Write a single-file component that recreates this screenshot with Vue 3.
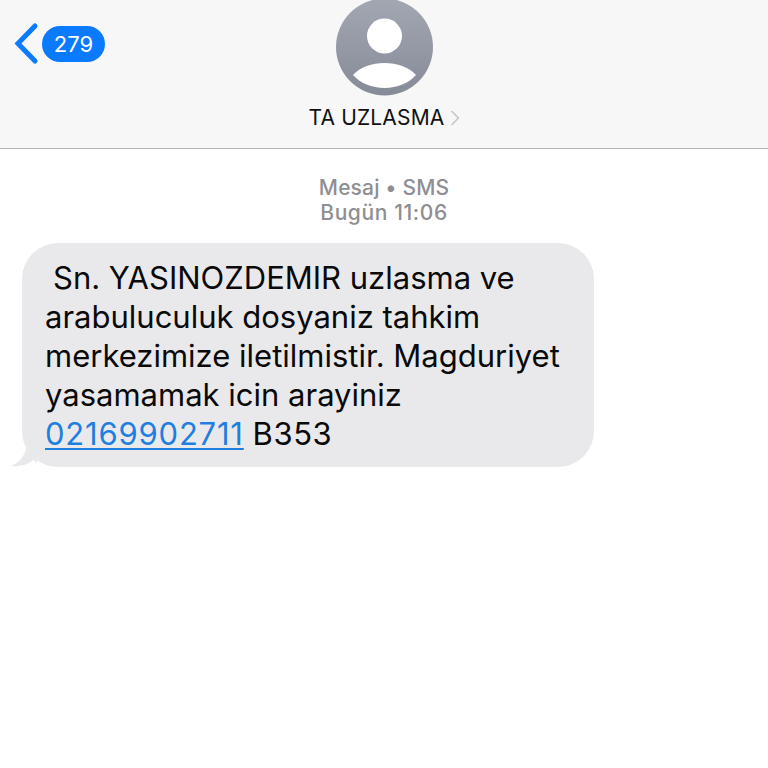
<template>
  <div class="screen">
    <header class="nav">
      <div class="back">
        <svg class="chevron" width="26" height="44" viewBox="0 0 26 44">
          <path d="M22 4 L5 21.5 L22 39" fill="none" stroke="#0a7aff" stroke-width="5" stroke-linecap="round" stroke-linejoin="miter" />
        </svg>
        <span class="badge">279</span>
      </div>
      <div class="contact">
        <svg class="avatar" width="98" height="98" viewBox="0 0 98 98">
          <defs>
            <linearGradient id="av" x1="0" y1="0" x2="0" y2="1">
              <stop offset="0" stop-color="#a3a7b2" />
              <stop offset="1" stop-color="#868b98" />
            </linearGradient>
          </defs>
          <circle cx="49.5" cy="49" r="48.5" fill="url(#av)" />
          <circle cx="49.5" cy="38" r="17.5" fill="#fff" />
          <path d="M18 77 C25 69 37 65 49.5 65 C62 65 74 69 81 77 C74 85 62 90 49.5 90 C37 90 25 85 18 77 Z" fill="#fff" />
        </svg>
        <div class="name">
          <span>TA UZLASMA</span>
          <svg width="10" height="16" viewBox="0 0 10 16">
            <path d="M1.5 1 L8.5 8 L1.5 15" fill="none" stroke="#c6c6ca" stroke-width="1.6" />
          </svg>
        </div>
      </div>
      <div></div>
    </header>

    <main class="thread">
      <div class="meta">
        <div>Mesaj • SMS</div>
        <div class="time">Bugün 11:06</div>
      </div>
      <div class="bubble">
        <div class="line first">Sn. YASINOZDEMIR uzlasma ve</div>
        <div class="line">arabuluculuk dosyaniz tahkim</div>
        <div class="line">merkezimize iletilmistir. Magduriyet</div>
        <div class="line">yasamamak icin arayiniz</div>
        <div class="line"><a class="phone">02169902711</a> <span class="code">B353</span></div>
        <svg class="tail" width="26" height="26" viewBox="0 0 26 26">
          <path d="M16 0 C16 8 13 20 0 25 C8 26 17 24 22 19 L26 22 L26 0 Z" fill="#e9e9eb" />
        </svg>
      </div>
    </main>
  </div>
</template>

<script setup>
</script>

<style>
html, body {
  margin: 0;
  background: #fff;
}
</style>

<style scoped>
.screen {
  width: 768px;
  height: 768px;
  overflow: hidden;
  background: #fff;
  font-family: Inter, "Liberation Sans", sans-serif;
}

.nav {
  display: grid;
  grid-template-columns: 1fr auto 1fr;
  height: 148px;
  background: #f7f7f7;
  border-bottom: 1px solid #b6b6b8;
}

.back {
  display: flex;
  align-items: center;
  align-self: start;
  gap: 3px;
  padding: 22px 0 0 13px;
}

.badge {
  width: 63px;
  height: 36px;
  line-height: 36px;
  border-radius: 18px;
  background: #0a7aff;
  color: #fff;
  font-size: 22px;
  text-align: center;
}

.contact {
  display: flex;
  flex-direction: column;
  align-items: center;
}

.avatar {
  display: block;
  margin-top: -2px;
}

.name {
  display: flex;
  align-items: center;
  gap: 6px;
  margin-top: 9px;
  padding-left: 1px;
  color: #111;
  font-size: 21px;
  letter-spacing: 0.15px;
  line-height: 26px;
}

.thread {
  display: flex;
  flex-direction: column;
  padding: 26px 0 0 22px;
}

.meta {
  margin-left: -22px;
  text-align: center;
  color: #8e8e93;
  font-size: 21px;
  font-weight: 500;
  letter-spacing: 0.15px;
  line-height: 25px;
}

.time {
  letter-spacing: 0.6px;
}

.bubble {
  position: relative;
  box-sizing: border-box;
  width: 572px;
  height: 224px;
  margin-top: 18px;
  padding: 15px 23px;
  border-radius: 36px;
  background: #e9e9eb;
  color: #0a0a0a;
  font-size: 31px;
  line-height: 39px;
}

.line {
  white-space: nowrap;
}

.first {
  padding-left: 8px;
}

.phone {
  color: #1f7fe0;
  letter-spacing: 0.8px;
  text-decoration: underline;
  text-decoration-thickness: 2px;
  text-underline-offset: 3px;
}

.code {
  letter-spacing: 0.6px;
}

.tail {
  position: absolute;
  left: -11px;
  bottom: 0;
}
</style>
